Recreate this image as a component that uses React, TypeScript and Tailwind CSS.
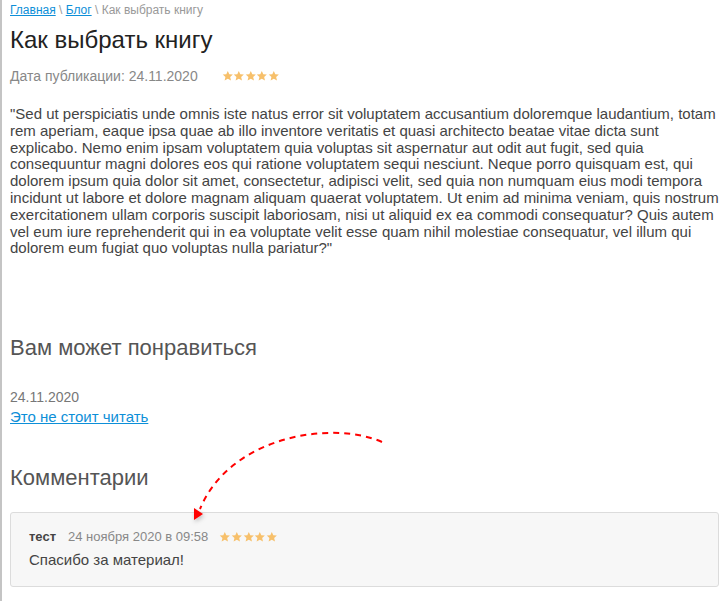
import React from 'react';

const TEXT =
  '"Sed ut perspiciatis unde omnis iste natus error sit voluptatem accusantium doloremque laudantium, totam rem aperiam, eaque ipsa quae ab illo inventore veritatis et quasi architecto beatae vitae dicta sunt explicabo. Nemo enim ipsam voluptatem quia voluptas sit aspernatur aut odit aut fugit, sed quia consequuntur magni dolores eos qui ratione voluptatem sequi nesciunt. Neque porro quisquam est, qui dolorem ipsum quia dolor sit amet, consectetur, adipisci velit, sed quia non numquam eius modi tempora incidunt ut labore et dolore magnam aliquam quaerat voluptatem. Ut enim ad minima veniam, quis nostrum exercitationem ullam corporis suscipit laboriosam, nisi ut aliquid ex ea commodi consequatur? Quis autem vel eum iure reprehenderit qui in ea voluptate velit esse quam nihil molestiae consequatur, vel illum qui dolorem eum fugiat quo voluptas nulla pariatur?"';

const Stars: React.FC = () => (
  <span className="inline-flex">
    {[0, 1, 2, 3, 4].map((i) => (
      <svg key={i} width="11.6" height="12" viewBox="0 0 24 24">
        <path
          d="M12 1.5l3.1 6.9 7.4.7-5.6 5 1.7 7.4L12 17.6l-6.6 3.9 1.7-7.4-5.6-5 7.4-.7z"
          fill="#f7c06b"
        />
      </svg>
    ))}
  </span>
);

export default function App() {
  return (
    <div
      className="relative min-h-[601px] border-l-2 border-[#c4c4c4] bg-white pl-2 pr-[7px] text-[#444]"
      style={{ fontFamily: '"Liberation Sans", Arial, sans-serif' }}
    >
      {/* Breadcrumbs */}
      <div className="pt-[2px] text-[12px] leading-[16px] text-[#999]">
        <a href="#" className="text-[#0d8fd8] underline">Главная</a> \{' '}
        <a href="#" className="text-[#0d8fd8] underline">Блог</a> \ Как выбрать книгу
      </div>

      <h1 className="mt-[8px] text-[24px] leading-[28px] text-[#222]">Как выбрать книгу</h1>

      <div className="mt-[14px] flex items-center gap-[24px] text-[14px] leading-[16px] text-[#888]">
        <span>Дата публикации: 24.11.2020</span>
        <Stars />
      </div>

      <p className="mt-[22px] text-[15px] leading-[16.8px] text-[#444]">{TEXT}</p>

      <h2 className="mt-[78px] text-[22px] leading-[26px] text-[#555]">Вам может понравиться</h2>

      <div className="mt-[27px] text-[14px] leading-[19px] text-[#777]">24.11.2020</div>
      <a href="#" className="block text-[15px] leading-[19px] text-[#0d8fd8] underline">
        Это не стоит читать
      </a>

      <h2 className="mt-[39px] text-[22px] leading-[26px] text-[#555]">Комментарии</h2>

      {/* Comment */}
      <div className="mt-[21px] rounded-[3px] border border-[#dcdcdc] bg-[#f7f7f7] px-[18px] pt-[16px] pb-[17px]">
        <div className="flex items-center text-[13px] leading-[16px]">
          <span className="font-bold text-[#444]">тест</span>
          <span className="ml-[12px] text-[#888]">24 ноября 2020 в 09:58</span>
          <span className="ml-[11px] flex"><Stars /></span>
        </div>
        <div className="mt-[6px] text-[15px] leading-[18px] text-[#444]">Спасибо за материал!</div>
      </div>

      {/* Red dashed arrow overlay */}
      <svg
        className="pointer-events-none absolute left-0 top-0"
        width="726"
        height="601"
        viewBox="0 0 726 601"
      >
        <defs>
          <filter id="sh" x="-50%" y="-50%" width="200%" height="200%">
            <feDropShadow dx="1" dy="2" stdDeviation="2" floodColor="#000" floodOpacity="0.25" />
          </filter>
        </defs>
        <path
          d="M380 442 C 330 420, 228 436, 198 509"
          fill="none"
          stroke="#f00"
          strokeWidth="2"
          strokeDasharray="6 5"
        />
        <path d="M192 508 L201 514 L192 520 Z" fill="#f00" filter="url(#sh)" />
      </svg>
    </div>
  );
}
